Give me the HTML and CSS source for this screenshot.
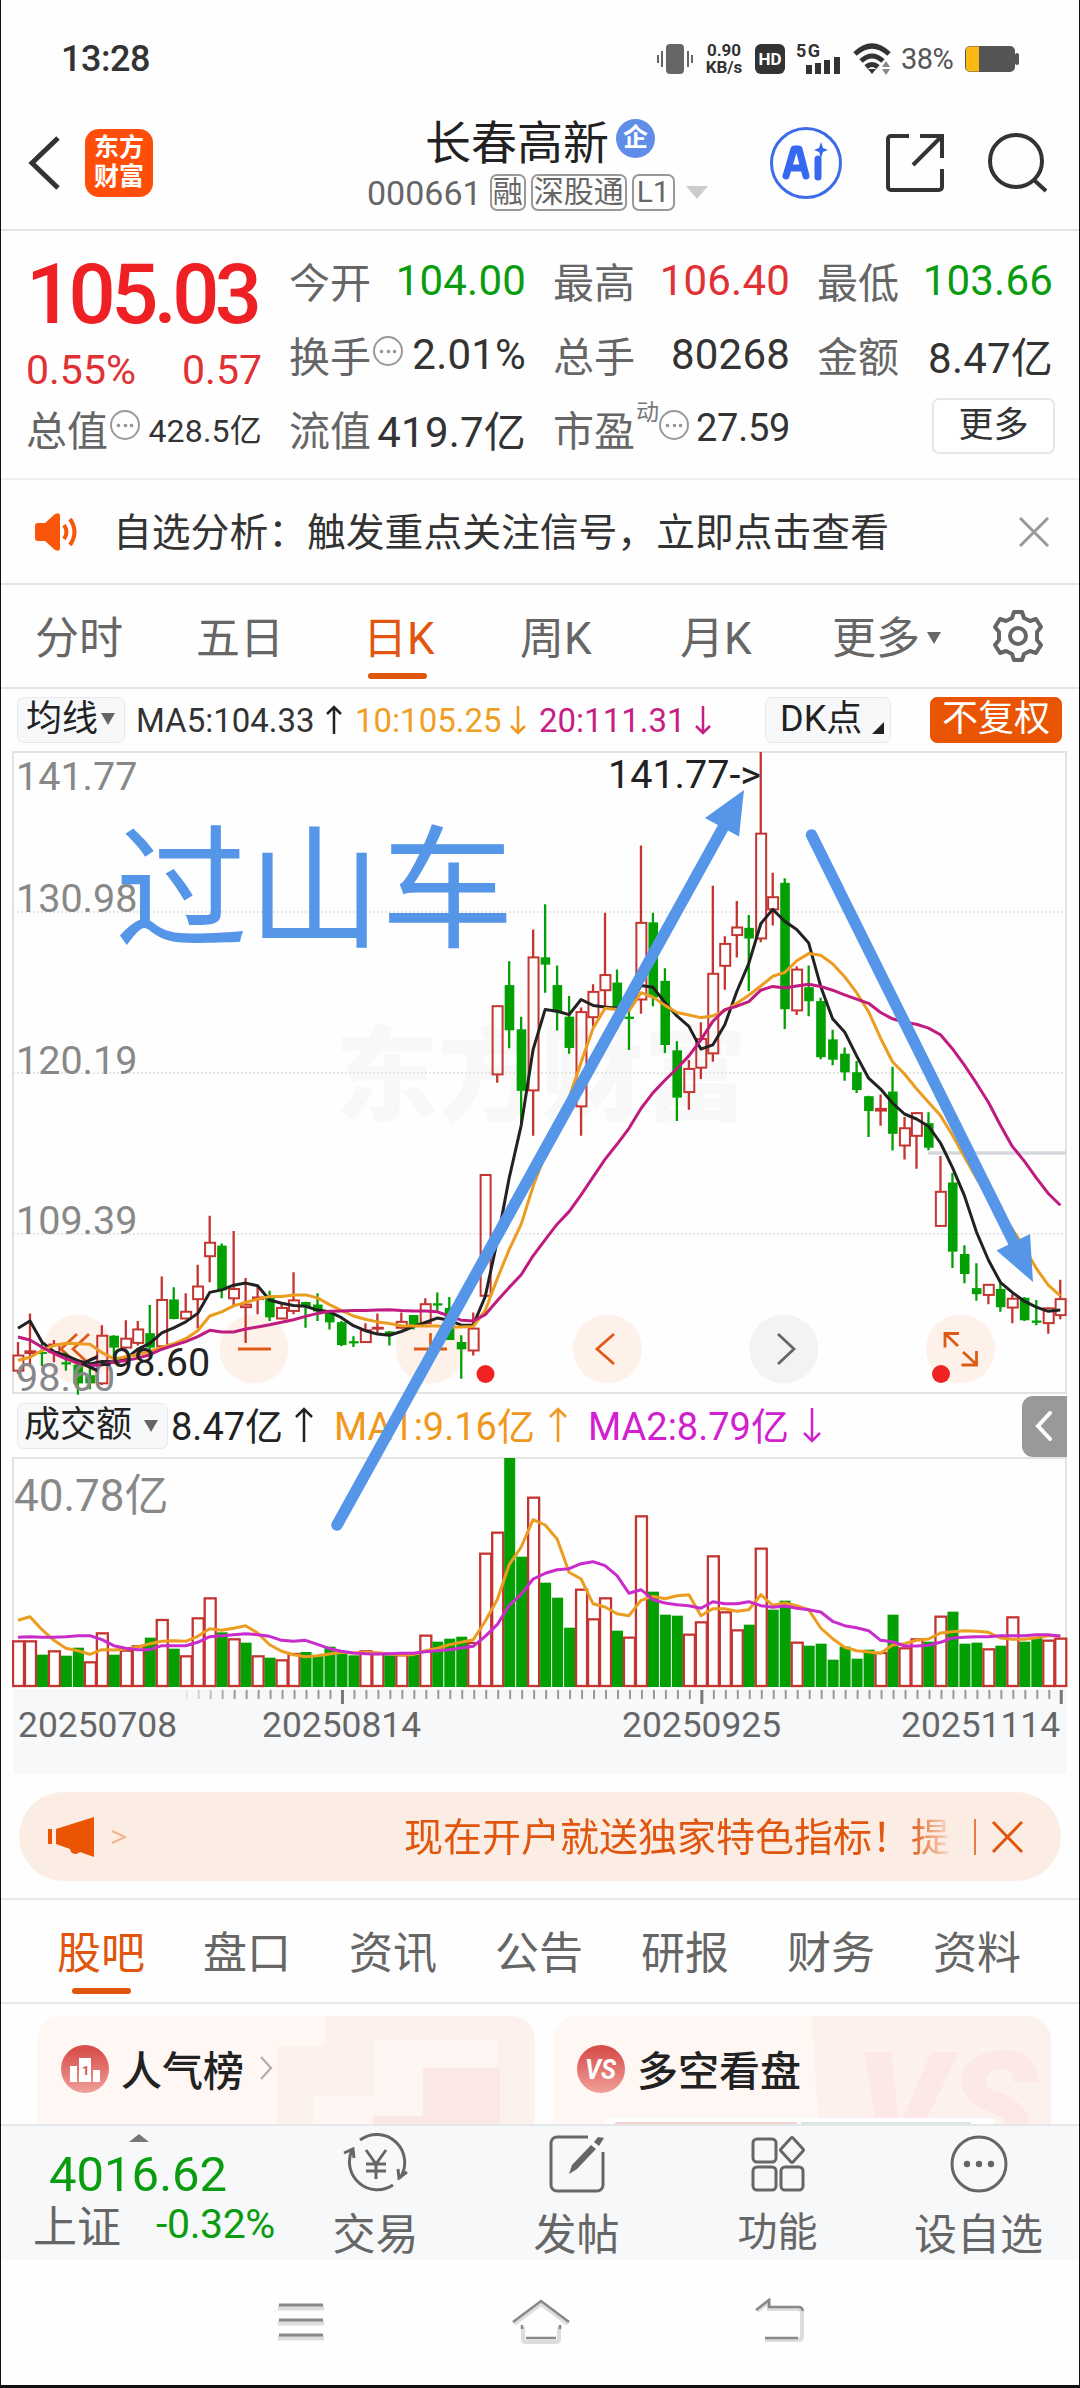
FILE: index.html
```html
<!doctype html>
<html lang="zh-CN">
  <head>
    <meta charset="UTF-8" />
    <meta name="viewport" content="width=device-width, initial-scale=1.0" />
    <title>长春高新 000661</title>
    <link rel="stylesheet" href="styles.css">
  </head>
  <body>
    <!-- 状态栏 -->
    <div class="status">
      <span class="clock">13:28</span>
      <svg class="vibrate" width="36" height="32" viewBox="0 0 36 32">
        <rect x="9" y="1" width="18" height="30" rx="4" fill="#666" />
        <path d="M5 8v16M1 12v8M31 8v16M35 12v8" stroke="#666" stroke-width="2" />
      </svg>
      <span class="speed">0.90<br>KB/s</span>
      <span class="hd">HD</span>
      <svg class="signal" width="46" height="32" viewBox="0 0 46 32">
        <text x="0" y="14" font-size="18" font-weight="700" textLength="24">5G</text>
        <path d="M13 22v9M22 20v11M31 17v14M41 14v17" stroke="#333" stroke-width="6" />
      </svg>
      <svg class="wifi" width="38" height="32" viewBox="0 0 38 32" fill="none" stroke="#333" stroke-width="5">
        <path d="M2 11Q19-5 36 11M8 18Q19 8 30 18M13 24Q19 19 25 24" />
        <path d="M19 31l-4-5h8z" fill="#333" stroke="none" />
        <path d="M33 18l4 6h-8zM33 32l4-6h-8z" fill="#888" stroke="none" />
      </svg>
      <span class="percent">38%</span>
      <svg class="battery" width="55" height="28" viewBox="0 0 55 28">
        <rect x="1" y="1" width="50" height="26" rx="5" fill="#555" />
        <rect x="51" y="8" width="4" height="12" rx="2" fill="#555" />
        <path d="M15 1.500H6a4 4 0 0 0-4 4v17a4 4 0 0 0 4 4h9z" fill="#fdb913" />
      </svg>
    </div>

    <!-- 标题栏 -->
    <header class="topbar">
      <svg class="back" width="34" height="56" viewBox="0 0 34 56"><path d="M30 3L4 28l26 25" fill="none" stroke="#333" stroke-width="5" /></svg>
      <div class="logo">东方<br>财富</div>
      <div class="stock">
        <div class="name">长春高新<span class="corp">企</span></div>
        <div class="code">000661<span class="tag">融</span><span class="tag">深股通</span><span class="tag tag-l1">L1</span><i class="caret"></i></div>
      </div>
      <svg class="ai" width="74" height="74" viewBox="0 0 74 74">
        <circle cx="37" cy="37" r="34.500" fill="none" stroke="#3d6ce8" stroke-width="3" />
        <path d="M17 50L25 23h5l7 27M21 42h12" fill="none" stroke="#3569f0" stroke-width="7" stroke-linejoin="round" stroke-linecap="round" />
        <path d="M49 33v18" stroke="#3569f0" stroke-width="7" stroke-linecap="round" />
        <path d="M52 16l2 6 5 2-5 2-2 6-2-6-5-2 5-2z" fill="#3569f0" />
      </svg>
      <svg class="share" width="60" height="60" viewBox="0 0 60 60" fill="none" stroke="#333" stroke-width="4">
        <path d="M24 3H6a3 3 0 0 0-3 3v48a3 3 0 0 0 3 3h48a3 3 0 0 0 3-3V36M28 32L56 4M35 3h22v22" />
      </svg>
      <svg class="search" width="62" height="62" viewBox="0 0 62 62" fill="none" stroke="#333" stroke-width="4">
        <circle cx="29" cy="29" r="26" /><path d="M47 48l12 11" />
      </svg>
    </header>

    <!-- 行情 -->
    <section class="quote">
      <div class="last">
        <div class="price">105.03</div>
        <div class="pair red"><span>0.55%</span><span>0.57</span></div>
      </div>
      <div class="cell c1 r3"><label>总值</label><i class="dots"></i><b class="small">428.5亿</b></div>
      <div class="cell c2 r1"><label>今开</label><b class="green">104.00</b></div>
      <div class="cell c2 r2"><label>换手</label><i class="dots"></i><b>2.01%</b></div>
      <div class="cell c2 r3"><label>流值</label><b>419.7亿</b></div>
      <div class="cell c3 r1"><label>最高</label><b class="red">106.40</b></div>
      <div class="cell c3 r2"><label>总手</label><b>80268</b></div>
      <div class="cell c3 r3"><label>市盈</label><sup>动</sup><i class="dots"></i><b class="pe">27.59</b></div>
      <div class="cell c4 r1"><label>最低</label><b class="green">103.66</b></div>
      <div class="cell c4 r2"><label>金额</label><b>8.47亿</b></div>
      <div class="cell c4 r3"><button class="more">更多</button></div>
    </section>

    <!-- 自选分析提示 -->
    <section class="notice">
      <svg width="44" height="38" viewBox="0 0 44 38">
        <path d="M0 13q0-3 3-3h7L20 1q5-2 5 2v32q0 4-5 2L10 28H3q-3 0-3-3z" fill="#f9560a" />
        <path d="M29 12q5 7 0 14M35 6q9 13 0 26" fill="none" stroke="#f9560a" stroke-width="4" />
      </svg>
      <p>自选分析：触发重点关注信号，立即点击查看</p>
      <svg width="30" height="30" viewBox="0 0 30 30"><path d="M1 1l28 28M29 1L1 29" stroke="#999" stroke-width="3" /></svg>
    </section>

    <!-- 周期切换 -->
    <nav class="periods">
      <a>分时</a><a>五日</a><a class="on">日K</a><a>周K</a><a>月K</a><a>更多<i class="caret"></i></a>
      <svg width="52" height="52" viewBox="0 0 52 52" fill="none" stroke="#666" stroke-width="4" stroke-linejoin="round">
        <path d="M20 8l2-6h8l2 6 6 3 6-2 5 8-4 5v8l4 5-5 8-6-2-6 3-2 6h-8l-2-6-6-3-6 2-5-8 4-5v-8l-4-5 5-8 6 2z" />
        <circle cx="26" cy="26" r="8" />
      </svg>
    </nav>

    <!-- K线图 -->
    <section class="chart">
      <div class="ma-row">
        <span class="chip chip-ma">均线<i class="caret"></i></span>
        <span class="ma5">MA5:104.33</span><svg class="arrow dark" viewBox="0 0 18 30"><path d="M9 29V2M2 9l7-7 7 7" /></svg>
        <span class="ma10">10:105.25</span><svg class="arrow orange" viewBox="0 0 18 30"><path d="M9 1v27M2 21l7 7 7-7" /></svg>
        <span class="ma20">20:111.31</span><svg class="arrow pink" viewBox="0 0 18 30"><path d="M9 1v27M2 21l7 7 7-7" /></svg>
        <span class="chip chip-dk">DK点<i class="corner"></i></span>
        <span class="chip chip-fq">不复权</span>
      </div>
      <svg id="kline" class="kline" width="1056" height="644" viewBox="0 0 1056 644"></svg>
      <div class="vol-row">
        <span class="chip chip-vol">成交额<i class="caret"></i></span>
        <span class="vol0">8.47亿</span><svg class="arrow dark" viewBox="0 0 18 36"><path d="M9 35V2M1 10l8-8 8 8" /></svg>
        <span class="vol1">MA1:9.16亿</span><svg class="arrow orange" viewBox="0 0 18 36"><path d="M9 35V2M1 10l8-8 8 8" /></svg>
        <span class="vol2">MA2:8.79亿</span><svg class="arrow violet" viewBox="0 0 18 36"><path d="M9 1v33M1 26l8 8 8-8" /></svg>
        <span class="fold"><svg width="18" height="30" viewBox="0 0 18 30"><path d="M15 2L3 15l12 13" fill="none" stroke="#fff" stroke-width="4" stroke-linecap="round" /></svg></span>
      </div>
      <svg id="volume" class="volume" width="1056" height="232" viewBox="0 0 1056 232"></svg>
      <svg id="axis" class="axis" width="1054" height="85" viewBox="0 0 1054 85"></svg>

      <!-- 手绘标注 -->
      <svg class="mark" width="1080" height="1085" viewBox="0 689 1080 1085">
        <g fill="#5596e8" stroke="#5596e8">
          <path d="M337 1525L724 826" stroke-width="11.500" stroke-linecap="round" />
          <path d="M744 790l-39 28 34 18.500z" stroke="none" />
          <path d="M811.500 835L1016 1247" stroke-width="11.500" stroke-linecap="round" />
          <path d="M1033 1282l-3-48-33.500 16.500z" stroke="none" />
          <text class="coaster" x="115" y="937" stroke="none">过山车</text>
        </g>
      </svg>
    </section>

    <!-- 开户广告 -->
    <section class="promo">
      <div class="pill">
        <svg width="80" height="42" viewBox="0 0 80 42">
          <path d="M0 13h4v15H0zM8 13L46 1v40l-14-5q-5 4-9 0l-1-3-14-5z" fill="#ea5504" />
          <path d="M64 15l13 6-13 6" fill="none" stroke="#f3b28c" stroke-width="2" />
        </svg>
        <p>现在开户就送独家特色指标！提升</p>
        <svg width="50" height="36" viewBox="0 0 50 36" fill="none" stroke="#e0560f"><path d="M1 0v36" stroke-width="1.500" /><path d="M19 3l29 30M48 3L19 33" stroke-width="3" /></svg>
      </div>
    </section>

    <nav class="tabs">
      <a class="on">股吧</a><a>盘口</a><a>资讯</a><a>公告</a><a>研报</a><a>财务</a><a>资料</a>
    </nav>

    <section class="cards">
      <div class="card">
        <svg class="deco" width="258" height="108" viewBox="0 0 258 108">
          <path d="M48 0h210v108H0V30h48z" fill="#fdf1ee" /><path d="M98 24h122v84H36V80h62z" fill="#fef6f3" />
          <path d="M146 52h77v56H96v-8h50z" fill="#fbe8e6" />
        </svg>
        <svg width="48" height="48" viewBox="0 0 48 48">
          <circle cx="24" cy="24" r="24" fill="url(#ball)" />
          <path d="M9 21h7v16H9zM18 13h12v24H18zM32 25h7v12h-7z" fill="#fff" />
          <text x="21" y="30" font-size="13" font-weight="700" fill="#d9544f">1</text>
        </svg>
        <h3>人气榜</h3>
        <svg class="go" width="14" height="24" viewBox="0 0 14 24"><path d="M2 1l10 11L2 23" fill="none" stroke="#aaa" stroke-width="2" /></svg>
      </div>
      <div class="card">
        <svg class="deco" width="240" height="108" viewBox="0 0 240 108">
          <path d="M0 0h240v108H8z" fill="#fdf1ee" />
          <text x="44" y="140" font-size="146" font-weight="900" font-style="italic" fill="#fce8e6">VS</text>
        </svg>
        <svg class="bar" width="390" height="6" viewBox="0 0 390 6"><rect x="0" y="0" width="390" height="6" rx="3" fill="#fff" /><path d="M12 4h180v2H8z" fill="#f6d4d2" /><path d="M196 4h170v2H196z" fill="#d5e8dc" /></svg>
        <svg width="48" height="48" viewBox="0 0 48 48">
          <defs><linearGradient id="ball" x1="0" y1="0" x2="0" y2="1"><stop offset="0.100" stop-color="#d8504c" /><stop offset="1" stop-color="#f0a09a" /></linearGradient></defs>
          <circle cx="24" cy="24" r="24" fill="url(#ball)" />
          <text x="8" y="34" font-size="28" font-weight="700" font-style="italic" fill="#fff" textLength="31" lengthAdjust="spacingAndGlyphs">VS</text>
        </svg>
        <h3>多空看盘</h3>
      </div>
    </section>

    <!-- 底部工具栏 -->
    <footer class="toolbar">
      <div class="index">
        <i class="up"></i>
        <div class="point">4016.62</div>
        <div class="change"><span>上证</span><em>-0.32%</em></div>
      </div>
      <div class="tool">
        <svg width="66" height="60" viewBox="0 0 66 60" fill="none" stroke="#666" stroke-width="3">
          <path d="M17 7a28 28 0 0 1 40 38M50 52A28 28 0 0 1 9 17" /><path d="M1 20l9-4 1 9M64 39l-8 6-1-9" />
          <path d="M23 17l10 14 10-14M23 31h20M23 38h20M33 31v15" />
        </svg>
        <span>交易</span>
      </div>
      <div class="tool">
        <svg width="56" height="60" viewBox="0 0 56 60" fill="none" stroke="#666" stroke-width="3">
          <path d="M39 4H8a6 6 0 0 0-6 6v42a6 6 0 0 0 6 6h40a6 6 0 0 0 6-6V19" />
          <path d="M20 41l3-9L42 12l5 4-19 20z" fill="#666" stroke="none" /><path d="M45 9l4-5 6 1-5 8z" fill="#666" stroke="none" />
        </svg>
        <span>发帖</span>
      </div>
      <div class="tool tool-fn">
        <svg width="54" height="60" viewBox="0 0 54 60" fill="none" stroke="#666" stroke-width="3">
          <rect x="2" y="6" width="23" height="23" rx="4" /><rect x="2" y="34" width="23" height="23" rx="4" /><rect x="30" y="34" width="22" height="23" rx="4" />
          <path d="M40 5q1-1 2 0l10 11q1 1 0 2L42 29q-1 1-2 0L30 18q-1-1 0-2z" />
        </svg>
        <span>功能</span>
      </div>
      <div class="tool">
        <svg width="60" height="60" viewBox="0 0 60 60"><circle cx="30" cy="31" r="27" fill="none" stroke="#666" stroke-width="3" /><g fill="#666"><circle cx="18" cy="31" r="3.200" /><circle cx="30" cy="31" r="3.200" /><circle cx="42" cy="31" r="3.200" /></g></svg>
        <span>设自选</span>
      </div>
    </footer>

    <div class="sysnav">
      <svg width="46" height="44" viewBox="0 0 46 44"><path d="M0 7h46M0 22h46M0 37h46" stroke="#ddd" stroke-width="5" /><path d="M1 4h44M1 19h44M1 34h44" stroke="#888" stroke-width="3" /></svg>
      <svg width="58" height="46" viewBox="0 0 58 46" fill="none"><path d="M2 26L29 6l27 20M11 29v12q0 3 3 3h30q3 0 3-3V29" stroke="#ddd" stroke-width="4" /><path d="M1 24L29 3l28 21M10 27v4M48 27v4M14 40h30" stroke="#888" stroke-width="2.500" /></svg>
      <svg width="50" height="46" viewBox="0 0 50 46" fill="none"><path d="M2 13L14 4v7h29q4 0 4 4v23q0 4-4 4H10" stroke="#ddd" stroke-width="4" /><path d="M1 12L14 2v7h30q3 0 4 4M10 40h33" stroke="#888" stroke-width="2.500" /></svg>
    </div>

    <script src="script.js"></script>
  </body>
</html>
```

FILE: styles.css
```css
* {
  margin: 0;
  padding: 0;
  box-sizing: border-box;
}
body {
  width: 1080px;
  height: 2388px;
  overflow: hidden;
  background: #fefefe;
  border: 1px solid #111;
  border-top: 0;
  border-bottom-width: 3px;
  font-family: Roboto, "Noto Sans CJK SC", sans-serif;
  color: #333;
  display: flex;
  flex-direction: column;
  white-space: nowrap;
}
svg {
  display: block;
  flex: none;
}
i,
em,
b {
  font-style: normal;
  font-weight: 400;
}
.red {
  color: #e03134;
}
.green {
  color: #0a9c0f;
}
.caret {
  display: inline-block;
  border: 7px solid transparent;
  border-top: 12px solid #666;
  border-bottom: 0;
}

/* status bar */
.status {
  height: 100px;
  padding: 17px 60px 0 60px;
  display: flex;
  align-items: center;
}
.clock {
  font-size: 36px;
  font-weight: 500;
  letter-spacing: -0.5px;
  margin-right: auto;
}
.speed {
  margin-left: 12px;
  width: 38px;
  font-size: 17px;
  line-height: 17px;
  font-weight: 700;
  text-align: center;
}
.hd {
  margin-left: 12px;
  width: 30px;
  height: 30px;
  border-radius: 6px;
  background: #333;
  color: #fff;
  font-size: 17px;
  line-height: 30px;
  font-weight: 700;
  text-align: center;
}
.signal {
  margin-left: 11px;
  overflow: visible;
  fill: #333;
}
.wifi {
  margin-left: 11px;
}
.percent {
  margin-left: 10px;
  width: 55px;
  font-size: 29px;
  letter-spacing: -0.5px;
  color: #555;
}
.battery {
  margin-left: 8px;
}

/* header */
.topbar {
  height: 131px;
  border-bottom: 2px solid #e4e4e4;
  position: relative;
  display: flex;
  align-items: center;
  padding: 0 30px 4px 27px;
}
.logo {
  margin-left: 23px;
  width: 68px;
  height: 68px;
  border-radius: 14px;
  background: #ff4e0a;
  color: #fff;
  font-size: 25px;
  line-height: 29px;
  font-weight: 700;
  text-align: center;
  padding-top: 4px;
}
.stock {
  width: 350px;
  margin-left: 213px;
  margin-right: auto;
  padding-top: 6px;
}
.name {
  display: flex;
  align-items: center;
  height: 54px;
  padding-left: 59px;
  font-size: 46px;
  color: #222;
  gap: 7px;
}
.corp {
  width: 39px;
  height: 39px;
  border-radius: 50%;
  background: #5f8de8;
  color: #fff;
  font-size: 25px;
  line-height: 38px;
  font-weight: 700;
  text-align: center;
}
.code {
  display: flex;
  align-items: center;
  height: 54px;
  padding-left: 1px;
  font-size: 34px;
  color: #666;
}
.tag {
  height: 37px;
  margin-left: 5px;
  padding: 0 1px;
  border: 2px solid #999;
  border-radius: 7px;
  font-size: 30px;
  line-height: 31px;
}
.tag:first-child {
  margin-left: 8px;
}
.tag-l1 {
  padding: 0 3px;
}
.code .caret {
  margin-left: 11px;
  border-width: 13px 11px 0;
  border-top-color: #ccc;
}
.share {
  margin-left: 42px;
}
.search {
  margin-left: 42px;
}

/* quote */
.quote {
  height: 249px;
  border-bottom: 2px solid #f0f0f0;
  display: grid;
  grid-template-columns: 236px 237px 237px 236px;
  grid-template-rows: 74px 74px 74px;
  column-gap: 27px;
  padding: 12px 0 0 25px;
  font-size: 41px;
}
.last {
  grid-column: 1;
  grid-row: 1 / 3;
}
.price {
  height: 102px;
  line-height: 104px;
  font-size: 83px;
  font-weight: 500;
  letter-spacing: -4.6px;
  color: #ee2024;
}
.pair,
.cell {
  display: flex;
  justify-content: space-between;
  align-items: center;
}
.pair {
  height: 50px;
}
.c1 { grid-column: 1; }
.c2 { grid-column: 2; }
.c3 { grid-column: 3; }
.c4 { grid-column: 4; }
.r1 { grid-row: 1; }
.r2 { grid-row: 2; }
.r3 { grid-row: 3; }
.cell label {
  color: #666;
}
.cell b {
  margin-left: auto;
  font-size: 42px;
  letter-spacing: 0.2px;
}
.cell .small {
  font-size: 32px;
}
.cell .pe {
  font-size: 38px;
  letter-spacing: -0.3px;
}
.dots {
  width: 30px;
  height: 30px;
  margin: -6px 0 0 2px;
  border: 2px solid #999;
  border-radius: 50%;
  background: radial-gradient(circle, #999 1.5px, transparent 2.2px) center / 7px 7px no-repeat, radial-gradient(circle, #999 1.5px, transparent 2.2px) 3px center / 7px 7px no-repeat, radial-gradient(circle, #999 1.5px, transparent 2.2px) 16px center / 7px 7px no-repeat;
}
.cell sup {
  font-size: 23px;
  line-height: 23px;
  color: #777;
  align-self: flex-start;
  margin: 10px -2px 0 1px;
}
.more {
  width: 123px;
  height: 56px;
  margin: -4px -2px 0 auto;
  background: #fff;
  border: 2px solid #e6e6e6;
  border-radius: 7px;
  font: inherit;
  font-size: 35px;
  line-height: 46px;
  color: #333;
}

/* notice */
.notice {
  height: 105px;
  border-bottom: 2px solid #e4e4e4;
  display: flex;
  align-items: center;
  padding: 0 30px 0 34px;
}
.notice p {
  margin-left: 34px;
  margin-top: -5px;
  margin-right: auto;
  font-size: 38.8px;
}

/* period tabs */
.periods {
  height: 104px;
  border-bottom: 2px solid #e4e4e4;
  display: flex;
  align-items: center;
  padding: 0 35px 0 34px;
  font-size: 44px;
  color: #666;
}
.periods a {
  position: relative;
  top: -1px;
  width: 161px;
}
.periods a:nth-child(2) { width: 167px; }
.periods a:nth-child(3) { width: 157px; }
.periods a:nth-child(4) { width: 160px; }
.periods a:nth-child(5) { width: 152px; }
.periods a:nth-child(6) { width: 160px; }
.periods .caret {
  margin-left: 7px;
  vertical-align: 10px;
}
.on {
  color: #e0560f;
}
.periods .on::after,
.tabs .on::after {
  content: "";
  position: absolute;
  left: 5px;
  bottom: -12px;
  width: 59px;
  height: 6px;
  border-radius: 3px;
  background: #e0560f;
}

/* chart */
.chart {
  position: relative;
  height: 1085px;
}
.ma-row {
  height: 62px;
  display: flex;
  align-items: center;
  padding: 0 17px 0 16px;
  font-size: 33px;
}
.chip {
  height: 46px;
  line-height: 42px;
  border: 1px solid #e6e8eb;
  border-radius: 7px;
  background: #f6f8fa;
  font-size: 36px;
  color: #222;
}
.chip-ma {
  width: 108px;
  padding-left: 8px;
  margin-right: 11px;
}
.chip-ma .caret {
  vertical-align: 6px;
  margin-left: 3px;
}
.chip-dk {
  width: 126px;
  padding-left: 14px;
  margin-left: auto;
}
.corner {
  display: inline-block;
  margin-left: 10px;
  border-left: 12px solid transparent;
  border-bottom: 12px solid #222;
  vertical-align: -3px;
}
.chip-fq {
  width: 132px;
  margin-left: 39px;
  background: #ea5504;
  border-color: #ea5504;
  color: #fff;
  text-align: center;
}
.ma5 {
  width: 189px;
}
.ma10 {
  width: 154px;
  color: #efa024;
}
.ma20 {
  width: 155px;
  color: #c51e85;
}
.arrow {
  width: 18px;
  height: 30px;
  margin-right: 12px;
  fill: none;
  stroke: currentColor;
  stroke-width: 2.5;
}
.dark { color: #222; }
.orange { color: #f0981b; }
.pink { color: #c51e85; }
.violet { color: #d020d0; }
.kline {
  margin-left: 11px;
}
.kline text,
.volume text {
  fill: #888;
}
.axis-label {
  font-size: 39.5px;
}
.kline .tip {
  fill: #222;
}
.kline .watermark {
  font-size: 103px;
  font-weight: 900;
  fill: #f8f8f8;
}
.vol-row {
  height: 62px;
  display: flex;
  align-items: center;
  padding-left: 16px;
  font-size: 38px;
}
.vol-row .arrow {
  height: 36px;
  margin: -3px 21px 0 10px;
}
.chip-vol {
  width: 151px;
  padding-left: 6px;
  margin-right: 3px;
}
.chip-vol .caret {
  margin-left: 12px;
  vertical-align: 5px;
}
.vol0,
.vol1,
.vol2 {
  margin-top: -5px;
}
.vol0 {
  width: 114px;
  color: #222;
}
.vol1 {
  width: 205px;
  color: #f0981b;
}
.vol2 {
  width: 205px;
  color: #d020d0;
}
.fold {
  width: 45px;
  height: 61px;
  margin-left: auto;
  margin-right: 12px;
  padding-left: 13px;
  border-radius: 11px 0 0 11px;
  background: #999;
  display: flex;
  align-items: center;
}
.volume {
  margin-left: 11px;
}
.axis {
  margin-left: 12px;
  background: #f7f8fa;
}
.axis text {
  font-size: 35.4px;
  fill: #666;
}
.mark {
  position: absolute;
  left: -1px;
  top: 0;
}
.coaster {
  font-size: 133px;
}

/* promo */
.promo {
  height: 126px;
  border-bottom: 2px solid #e8e8e8;
  padding: 18px 18px 0;
}
.pill {
  height: 89px;
  border-radius: 45px;
  background: #fcede4;
  display: flex;
  align-items: center;
  padding: 0 37px 0 29px;
  color: #e0560f;
}
.pill p {
  width: 552px;
  margin-left: 276px;
  margin-top: -5px;
  margin-right: auto;
  overflow: hidden;
  font-size: 39px;
  -webkit-mask-image: linear-gradient(90deg, #000 505px, transparent 550px);
  mask-image: linear-gradient(90deg, #000 505px, transparent 550px);
}

/* tabs */
.tabs {
  height: 104px;
  border-bottom: 2px solid #e8e8e8;
  display: flex;
  align-items: center;
  padding: 0 0 3px 56px;
  font-size: 44px;
  color: #666;
}
.tabs a {
  position: relative;
  width: 146px;
}
.tabs .on::after {
  left: 15px;
}

/* cards */
.cards {
  height: 120px;
  padding: 12px 27px 0 36px;
  display: flex;
  gap: 18px;
  overflow: hidden;
}
.card {
  position: relative;
  width: 498px;
  height: 130px;
  border-radius: 24px 24px 0 0;
  background: #fef7f4;
  overflow: hidden;
  display: flex;
  align-items: flex-start;
  padding: 29px 0 0 24px;
}
.card h3 {
  position: relative;
  margin: 3px 0 0 12px;
  font-size: 41px;
  line-height: 48px;
  font-weight: 500;
  color: #222;
}
.card .go {
  margin: 11px 0 0 15px;
}
.deco {
  position: absolute;
  right: 0;
  top: 0;
}
.bar {
  position: absolute;
  left: 52px;
  top: 102px;
}

/* bottom toolbar */
.toolbar {
  height: 136px;
  border-top: 2px solid #e4e6e8;
  background: #f7f8fa;
  display: flex;
}
.index {
  position: relative;
  width: 274px;
  padding: 21px 0 0 32px;
}
.up {
  position: absolute;
  left: 128px;
  top: 8px;
  border: 10px solid transparent;
  border-top: 0;
  border-bottom: 8px solid #777;
}
.point {
  padding-left: 16px;
  font-size: 49px;
  line-height: 56px;
  color: #0a9c0f;
}
.change {
  display: flex;
  justify-content: space-between;
  align-items: center;
  height: 41px;
  font-size: 44px;
  color: #666;
}
.change em {
  font-size: 41px;
  letter-spacing: -0.4px;
  color: #0a9c0f;
}
.tool {
  width: 201px;
  display: flex;
  flex-direction: column;
  align-items: center;
  padding-top: 7px;
  font-size: 43px;
  line-height: 60px;
  color: #666;
}
.tool span {
  margin-top: 12px;
}
.tool-fn {
  font-size: 40px;
}
.tool-fn span {
  margin-top: 10px;
}

.sysnav {
  display: flex;
  padding: 41px 0 0 277px;
}
.sysnav svg {
  margin-right: 188px;
}
.sysnav svg + svg {
  margin-right: 185px;
  margin-top: -3px;
}
```

FILE: script.js
```js
const RED = '#c43532';
const GREEN = '#03a003';
const STEP = 11.98;
const cx = (i) => 6 + i * STEP;

// [涨跌, 最高, 实体上沿, 实体下沿, 最低]
const candles = [
  ['r', 1430, 1462, 1498, 1505], ['r', 1362, 1452, 1456, 1485], ['g', 1430, 1455, 1457, 1487], ['r', 1425, 1436, 1454, 1478],
  ['g', 1455, 1479, 1482, 1498], ['g', 1470, 1485, 1527, 1555], ['g', 1490, 1510, 1527, 1542], ['r', 1390, 1415, 1528, 1532],
  ['g', 1414, 1416, 1442, 1465], ['r', 1378, 1422, 1443, 1445], ['r', 1380, 1400, 1432, 1438], ['g', 1342, 1410, 1442, 1447],
  ['r', 1274, 1330, 1440, 1442], ['g', 1300, 1330, 1374, 1376], ['r', 1314, 1358, 1374, 1376], ['r', 1246, 1298, 1328, 1398],
  ['r', 1130, 1194, 1226, 1288], ['g', 1196, 1202, 1306, 1326], ['r', 1166, 1304, 1326, 1342], ['r', 1278, 1341, 1347, 1432],
  ['r', 1296, 1324, 1328, 1364], ['g', 1308, 1326, 1370, 1380], ['r', 1340, 1349, 1374, 1376], ['r', 1264, 1331, 1356, 1364],
  ['g', 1334, 1336, 1345, 1396], ['g', 1314, 1342, 1356, 1380], ['g', 1360, 1362, 1382, 1400], ['g', 1380, 1384, 1436, 1440],
  ['g', 1416, 1429, 1432, 1442], ['r', 1385, 1402, 1430, 1432], ['r', 1362, 1396, 1398, 1410], ['g', 1404, 1406, 1410, 1438],
  ['r', 1360, 1382, 1396, 1398], ['g', 1366, 1367, 1388, 1400], ['r', 1326, 1340, 1385, 1388], ['g', 1312, 1339, 1342, 1356],
  ['g', 1323, 1350, 1424, 1424], ['g', 1414, 1431, 1446, 1517], ['r', 1360, 1398, 1450, 1462], ['r', 1033, 1033, 1320, 1320],
  ['r', 630, 632, 794, 814], ['g', 525, 583, 688, 732], ['g', 657, 688, 832, 910], ['r', 450, 516, 832, 940],
  ['g', 390, 517, 532, 600], ['g', 535, 583, 645, 690], ['g', 608, 658, 730, 745], ['r', 635, 646, 870, 940],
  ['r', 580, 598, 658, 680], ['r', 410, 558, 594, 640], ['g', 545, 577, 640, 688], ['g', 610, 658, 661, 736],
  ['r', 250, 434, 616, 650], ['g', 410, 434, 610, 632], ['g', 542, 573, 723, 743], ['g', 715, 738, 848, 905],
  ['r', 760, 781, 836, 878], ['r', 670, 710, 778, 805], ['r', 346, 555, 744, 764], ['r', 466, 484, 536, 593],
  ['r', 382, 445, 463, 516], ['g', 415, 447, 470, 596], ['r', 28, 222, 471, 480], ['r', 315, 373, 402, 440],
  ['g', 328, 340, 638, 686], ['r', 537, 545, 642, 653], ['g', 535, 588, 619, 656], ['g', 612, 621, 752, 758],
  ['g', 688, 712, 758, 772], ['g', 730, 746, 788, 809], ['g', 762, 790, 830, 838], ['g', 845, 847, 880, 943],
  ['r', 842, 876, 880, 916], ['g', 776, 836, 934, 975], ['r', 895, 922, 963, 996], ['r', 884, 886, 940, 1018],
  ['g', 884, 911, 967, 974], ['r', 988, 1073, 1154, 1154], ['g', 1028, 1052, 1214, 1254], ['g', 1200, 1222, 1267, 1290],
  ['g', 1243, 1303, 1315, 1332], ['r', 1292, 1294, 1318, 1340], ['g', 1285, 1305, 1346, 1358], ['r', 1315, 1327, 1348, 1385],
  ['g', 1323, 1326, 1377, 1380], ['g', 1330, 1380, 1383, 1390], ['r', 1348, 1350, 1385, 1410], ['r', 1282, 1328, 1366, 1376],
];

const ma5 = [1397, 1380, 1430, 1453, 1462, 1474, 1482, 1476, 1477, 1470, 1447, 1433, 1408, 1396, 1382, 1362, 1312, 1306, 1295, 1290, 1296, 1330,
  1338, 1343, 1345, 1354, 1358, 1372, 1391, 1403, 1411, 1414, 1405, 1393, 1383, 1373, 1378, 1390, 1390, 1322, 1190, 1040, 915, 735,
  640, 644, 652, 616, 630, 634, 637, 630, 583, 587, 623, 655, 680, 734, 724, 676, 597, 530, 436, 402, 430, 450, 482, 585, 662, 693, 750,
  803, 829, 862, 888, 900, 917, 957, 1015, 1082, 1168, 1235, 1288, 1312, 1333, 1347, 1357, 1354];
const ma10 = [1473, 1466, 1450, 1438, 1433, 1434, 1435, 1455, 1470, 1465, 1460, 1452, 1443, 1434, 1422, 1403, 1368, 1358, 1344, 1336, 1328, 1322,
  1322, 1318, 1318, 1325, 1341, 1355, 1368, 1376, 1382, 1386, 1391, 1392, 1392, 1392, 1394, 1394, 1393, 1355, 1280, 1210, 1150, 1060,
  985, 915, 850, 765, 685, 637, 640, 643, 600, 610, 630, 647, 653, 659, 655, 643, 625, 606, 584, 561, 552, 524, 507, 511, 531, 562, 600,
  645, 708, 764, 793, 828, 860, 892, 938, 990, 1040, 1085, 1125, 1162, 1205, 1255, 1295, 1320];
const ma20 = [1418, 1425, 1442, 1457, 1470, 1480, 1486, 1484, 1478, 1474, 1468, 1460, 1447, 1438, 1429, 1417, 1402, 1406, 1406, 1399, 1394, 1389,
  1383, 1377, 1369, 1362, 1357, 1356, 1355, 1355, 1354, 1353, 1355, 1356, 1356, 1358, 1368, 1378, 1380, 1365, 1332, 1300, 1270, 1225,
  1187, 1150, 1120, 1080, 1038, 996, 960, 922, 875, 838, 808, 780, 750, 712, 668, 640, 632, 621, 594, 585, 589, 584, 580, 585, 594, 605, 615,
  625, 647, 662, 670, 675, 684, 700, 733, 772, 815, 860, 915, 965, 1000, 1040, 1077, 1105];

const volumes = [755, 755, 795, 785, 798, 774, 818, 731, 795, 783, 770, 744, 691, 777, 800, 686, 626, 728, 749, 759, 800, 804,
  812, 793, 787, 796, 771, 790, 797, 785, 793, 797, 797, 795, 738, 756, 747, 741, 760, 492, 429, 205, 501, 324,
  579, 624, 714, 600, 689, 626, 723, 744, 380, 606, 675, 678, 735, 698, 500, 668, 722, 705, 477, 660, 633, 759, 768, 762, 810, 771, 807,
  780, 790, 675, 776, 749, 756, 681, 666, 762, 759, 779, 768, 683, 756, 745, 753, 747];
// 成交额颜色与K线不同的几根
const volFlip = { 6: 'r', 19: 'g', 51: 'r', 63: 'g' };
const vma1 = [692, 681, 720, 752, 776, 783, 794, 780, 781, 778, 772, 762, 755, 753, 755, 740, 717, 722, 716, 708, 730, 765,
  785, 795, 801, 798, 793, 788, 790, 788, 789, 793, 795, 795, 783, 776, 765, 758, 750, 695, 630, 525, 472, 390,
  406, 448, 548, 568, 642, 652, 672, 678, 632, 620, 627, 618, 615, 678, 657, 657, 665, 660, 615, 647, 640, 648, 660, 715, 747, 773, 783,
  787, 791, 766, 762, 752, 748, 730, 726, 723, 725, 728, 745, 749, 749, 744, 738, 738];
const vma2 = [743, 741, 743, 743, 741, 738, 738, 750, 768, 776, 780, 780, 768, 768, 768, 758, 741, 738, 735, 732, 735, 740,
  752, 755, 752, 764, 777, 785, 790, 792, 793, 792, 791, 791, 786, 783, 780, 775, 770, 740, 705, 647, 614, 568,
  551, 540, 537, 522, 516, 528, 558, 611, 600, 630, 640, 645, 648, 656, 636, 642, 642, 636, 648, 653, 649, 656, 660, 667, 695, 708, 714,
  723, 752, 756, 769, 769, 767, 758, 745, 743, 741, 741, 738, 738, 738, 735, 735, 740];

const ky = (v) => 1 + (v - 28) / 2.376;
const vy = (v) => 1 + (v - 205) / 3;

function line(values, y, color, width) {
  const pts = values.map((v, i) => `${cx(i).toFixed(1)},${y(v).toFixed(1)}`).join(' ');
  return `<polyline points="${pts}" fill="none" stroke="${color}" stroke-width="${width}" stroke-linejoin="round"/>`;
}

function drawKline() {
  let s = '<text class="watermark" x="323" y="362">东方财富</text>';
  s += '<path d="M1 642V1H1054V642Z" fill="none" stroke="#e3e3e3" stroke-width="2"/>';
  [161, 322, 483].forEach((y) => {
    s += `<path d="M1 ${y}H1054" stroke="#ddd" stroke-width="1.5" stroke-dasharray="2 2"/>`;
  });
  s += '<path d="M916 402H1054" stroke="#d5d8dd" stroke-width="3.500"/>';

  // 操作按钮
  [66, 242, 418.6, 595.5, 771.8, 948.5].forEach((x, i) => {
    s += `<circle cx="${x}" cy="598" r="34.500" fill="${i === 4 ? '#f3f3f3' : '#fef1ea'}"/>`;
  });
  s += '<g fill="none" stroke="#de5b16" stroke-width="2.8">';
  s += '<path d="M65 583L49 598l16 15M77 583L61 598l16 15M226 598h33M402 598h33M418.500 582v32M602 583l-17 15 17 15"/>';
  s += '<path d="M947 582.500h-14v14M933.500 583L946 595M951 601l13 12M964.500 600v14h-15"/></g>';
  s += '<path d="M766 583l16 15-16 15" fill="none" stroke="#666" stroke-width="2.8"/>';

  candles.forEach(([dir, hi, top, bot, lo], i) => {
    const x = cx(i);
    const color = dir === 'r' ? RED : GREEN;
    const t = ky(top);
    const b = ky(bot);
    s += `<path d="M${x} ${ky(hi)}V${t}M${x} ${b}V${ky(lo)}" stroke="${color}" stroke-width="2.3"/>`;
    if (dir === 'r') {
      s += `<rect x="${x - 4.6}" y="${t}" width="10" height="${Math.max(b - t, 0.6)}" fill="none" stroke="${color}" stroke-width="2"/>`;
    } else {
      s += `<rect x="${x - 4.5}" y="${t - 0.5}" width="9.6" height="${b - t + 1}" fill="${color}"/>`;
    }
  });

  ['141.77', '130.98', '120.19', '109.39', '98.60'].forEach((t, i) => {
    const y = [39, 161, 323, 483, 640][i];
    s += `<text class="axis-label" x="4" y="${y}">${t}</text>`;
  });
  s += line(ma5, ky, '#222', 3) + line(ma10, ky, '#ec9c1f', 3) + line(ma20, ky, '#c01c80', 3);
  s += '<text class="axis-label tip" x="68" y="625">&lt;-98.60</text>';
  s += '<text class="axis-label tip" x="596" y="37">141.77-&gt;</text>';
  s += '<circle cx="473.5" cy="623" r="9" fill="#f12222"/><circle cx="929" cy="623" r="9" fill="#f12222"/>';
  document.getElementById('kline').innerHTML = s;
}

function drawVolume() {
  let s = '<path d="M1 230V1H1054V230" fill="none" stroke="#e3e3e3" stroke-width="2"/>';
  volumes.forEach((v, i) => {
    const x = cx(i);
    const dir = volFlip[i] || candles[i][0];
    const y = vy(v);
    if (dir === 'r') {
      s += `<rect x="${x - 5}" y="${y}" width="11" height="${229 - y}" fill="#fff" stroke="${RED}" stroke-width="2.3"/>`;
    } else {
      s += `<rect x="${x - 5}" y="${y}" width="11" height="${230 - y}" fill="${GREEN}"/>`;
    }
  });
  s += line(vma1, vy, '#ec9c1f', 3) + line(vma2, vy, '#c92ccb', 3);
  s += '<text x="2" y="54" font-size="44">40.78亿</text>';
  document.getElementById('volume').innerHTML = s;
}

function drawAxis() {
  let s = '';
  for (let i = 14; i < 88; i++) {
    const big = i === 27 || i === 57 || i === 87;
    const alpha = Math.min(1, (i - 13) / 5);
    s += `<path d="M${cx(i)} 1v${big ? 14 : 9}" stroke="${big ? '#777' : '#999'}" stroke-width="${big ? 3 : 2}" opacity="${alpha}"/>`;
  }
  [['20250708', 5], ['20250814', 249], ['20250925', 609], ['20251114', 888]].forEach(([t, x]) => {
    s += `<text x="${x}" y="48">${t}</text>`;
  });
  document.getElementById('axis').innerHTML = s;
}

drawKline();
drawVolume();
drawAxis();
```
